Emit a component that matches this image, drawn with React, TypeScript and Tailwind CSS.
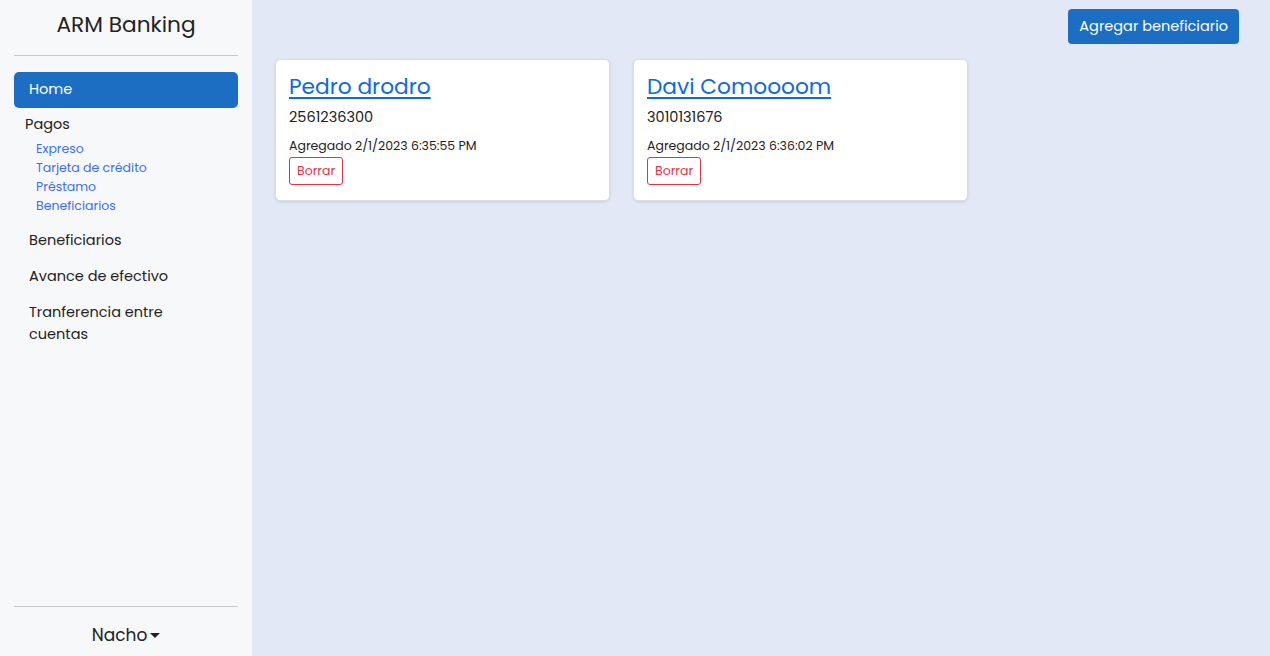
import React from "react";

const font = { fontFamily: "Poppins, 'Open Sans', 'Noto Sans', sans-serif" };

function Card({ name, num, date }: { name: string; num: string; date: string }) {
  return (
    <div className="w-[335px] h-[142px] bg-white rounded-[5px] border border-[#d9dde5] shadow-[0_1px_3px_rgba(0,0,0,0.12)] px-[13px] pt-[12px]">
      <a href="#" className="block text-[21.7px] leading-[30px] text-[#0d6ae0] underline underline-offset-[3px] decoration-[2px] w-fit">
        {name}
      </a>
      <div className="text-[14.5px] leading-[22px] text-[#222] mt-[4px]">{num}</div>
      <div className="text-[12.5px] leading-[18px] text-[#222] mt-[9px]">Agregado {date}</div>
      <button className="mt-[2px] h-[28px] px-[7px] border border-[#dc3545] rounded-[3px] text-[12.5px] text-[#dc3545] bg-white">
        Borrar
      </button>
    </div>
  );
}

export default function App() {
  return (
    <div className="flex w-[1270px] h-[656px] overflow-hidden" style={font}>
      <aside className="w-[252px] shrink-0 bg-[#f7f8fa] flex flex-col px-[14px]">
        <div className="h-[56px] flex items-center justify-center text-[21.7px] text-[#222] border-b border-[#c8c9cc] pb-[8px] pt-[4px]">
          ARM Banking
        </div>
        <div className="mt-[16px] h-[36px] bg-[#1b6ec2] rounded-[5px] flex items-center pl-[15px] text-white text-[14.5px]">
          Home
        </div>
        <div className="pl-[11px] mt-[5px]">
          <div className="text-[14.5px] leading-[22px] text-[#222]">Pagos</div>
          <div className="pl-[11px] mt-[4px] flex flex-col text-[12.5px] leading-[19px] text-[#3a6ff2]">
            <a href="#">Expreso</a>
            <a href="#">Tarjeta de crédito</a>
            <a href="#">Préstamo</a>
            <a href="#">Beneficiarios</a>
          </div>
        </div>
        <div className="pl-[15px] mt-[14px] flex flex-col gap-[14px] text-[14.5px] leading-[22px] text-[#222]">
          <div>Beneficiarios</div>
          <div>Avance de efectivo</div>
          <div className="max-w-[160px]">Tranferencia entre cuentas</div>
        </div>
        <div className="flex-1" />
        <div className="border-t border-[#c8c9cc] h-[50px] flex items-center justify-center text-[17px] text-[#222] pt-[8px]">
          Nacho
          <svg width="10" height="6" viewBox="0 0 10 6" className="ml-[3px] mt-[1px]">
            <path d="M0 0 L10 0 L5 5 Z" fill="#222" />
          </svg>
        </div>
      </aside>
      <main className="flex-1 bg-[#e2e8f5] flex flex-col pl-[23px] pr-[23px]">
        <div className="flex justify-end pt-[9px] pr-[8px]">
          <button className="h-[35px] px-[11px] bg-[#1b6ec2] rounded-[4px] text-white text-[14.5px]">
            Agregar beneficiario
          </button>
        </div>
        <div className="flex gap-[23px] mt-[15px]">
          <Card name="Pedro drodro" num="2561236300" date="2/1/2023 6:35:55 PM" />
          <Card name="Davi Comoooom" num="3010131676" date="2/1/2023 6:36:02 PM" />
        </div>
      </main>
    </div>
  );
}
